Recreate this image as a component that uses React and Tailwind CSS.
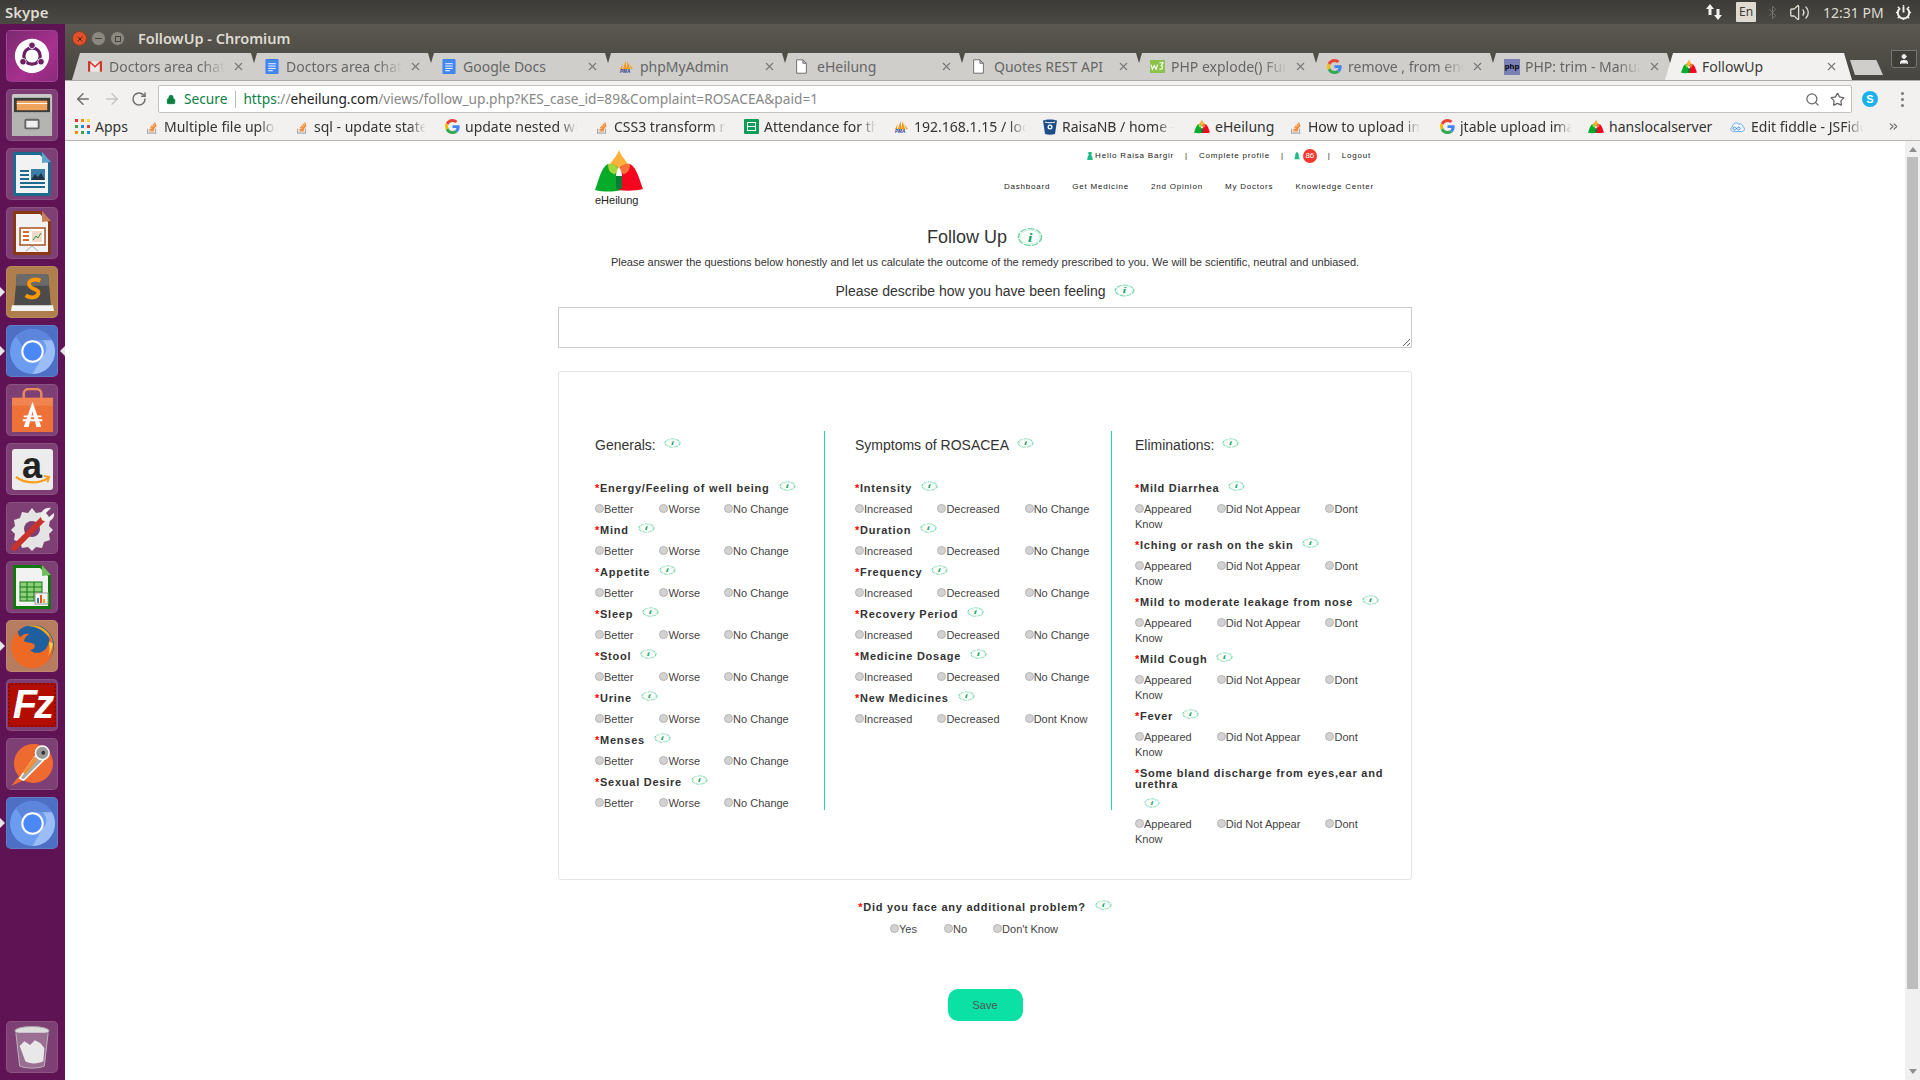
import React from "react";
import { ArrowLeft, ArrowRight, RotateCw, Lock, Search, Star, X, Bluetooth, Volume2, ChevronsRight, User } from "lucide-react";

const Logo = ({ className }) => (
  <svg viewBox="0 0 48 42" className={className}>
    <path d="M24 0C27 9 36 14 36 23C36 29 30 33 24 33C18 33 12 29 12 23C12 14 21 9 24 0Z" fill="#fdb13c" />
    <path d="M13 14C20 13 27 19 27 27C27 33 27 38 26 40C18 42 8 42 0 40C3 33 6 17 13 14Z" fill="#06ab2a" />
    <path d="M35 14C28 13 21 19 21 27C21 33 22 38 23 40C31 41 41 41 48 39C45 32 42 17 35 14Z" fill="#f4061e" />
    <path d="M13 14C17 13 22 16 24 20C21 22 20 25 19 24C15 23 13 20 13 14Z" fill="#a5d63c" />
    <path d="M35 14C31 13 26 16 24 20C27 22 28 25 29 24C33 23 35 20 35 14Z" fill="#f7713a" />
    <path d="M21 26C23 21 25 21 27 26L27 38L24 40L21 38Z" fill="#0c7a38" />
    <path d="M24 17C26 20 27 23 27 26L21 26C21 23 22 20 24 17Z" fill="#fff" />
  </svg>
);

const Info = ({ className }) => (
  <svg viewBox="0 0 26 26" preserveAspectRatio="none" className={className}>
    <ellipse cx="13" cy="13" rx="11.5" ry="11" fill="none" stroke="#6fd3a4" strokeWidth="1.6" strokeDasharray="7 1.4" />
    <ellipse cx="13" cy="13" rx="9.5" ry="9" fill="none" stroke="#c5eeda" strokeWidth="1" />
    <text x="13" y="19" textAnchor="middle" fontSize="17" fontStyle="italic" fontWeight="700" fontFamily="'Liberation Serif', serif" fill="#1aa566">i</text>
  </svg>
);

const Radio = () => (
  <span className="inline-block w-[9px] h-[9px] rounded-full bg-[#d2d2d2] border border-[#b4b4b4] align-[0px]" />
);

const Opt = ({ children, m = "" }) => (
  <span className={m}>
    <Radio />
    {children}{" "}
  </span>
);

const QLabel = ({ text }) => (
  <>
    <span className="text-[#f00]">*</span>
    {text}
  </>
);

const labelBase = "text-[11px] font-bold tracking-[0.75px] text-[#333]";
const labelCls = `${labelBase} leading-[14px]`;

const Q1 = ({ label, gap, a, b, c, m1, m2 }) => (
  <div className="h-[42px]">
    <div className={`${labelCls} flex items-center`}>
      <span><QLabel text={label} /></span>
      <Info className={`w-[17px] h-[10px] -mt-[4px] ${gap}`} />
    </div>
    <div className="mt-[7px] text-[11px] leading-[14px] text-[#444]">
      <Opt m={m1}>{a}</Opt>
      <Opt m={m2}>{b}</Opt>
      <Opt>{c}</Opt>
    </div>
  </div>
);

const Q3 = ({ label, gap }) => (
  <div className="h-[57px]">
    <div className={`${labelCls} flex items-center`}>
      <span><QLabel text={label} /></span>
      <Info className={`w-[17px] h-[10px] -mt-[4px] ${gap}`} />
    </div>
    <div className="mt-[7px] text-[11px] leading-[15px] text-[#444]">
      <Opt m="mr-[22px]">Appeared</Opt>
      <Opt m="mr-[22px]">Did Not Appear</Opt>
      <Opt>Dont Know</Opt>
    </div>
  </div>
);

const Heading = ({ children, gap }) => (
  <div className="h-[50px] flex items-start pt-[6px] text-[14px] leading-[16px] text-[#333]">
    <span>{children}</span>
    <Info className={`w-[17px] h-[10px] mt-[1px] ${gap}`} />
  </div>
);

const generals = [
  ["Energy/Feeling of well being", "ml-[9px]"],
  ["Mind", "ml-[9px]"],
  ["Appetite", "ml-[9px]"],
  ["Sleep", "ml-[9px]"],
  ["Stool", "ml-[9px]"],
  ["Urine", "ml-[9px]"],
  ["Menses", "ml-[9px]"],
  ["Sexual Desire", "ml-[9px]"],
];
const symptoms = [
  ["Intensity", "ml-[9px]"],
  ["Duration", "ml-[9px]"],
  ["Frequency", "ml-[9px]"],
  ["Recovery Period", "ml-[9px]"],
  ["Medicine Dosage", "ml-[9px]"],
];
const elim = [
  ["Mild Diarrhea", "ml-[9px]"],
  ["Iching or rash on the skin", "ml-[9px]"],
  ["Mild to moderate leakage from nose", "ml-[9px]"],
  ["Mild Cough", "ml-[9px]"],
  ["Fever", "ml-[9px]"],
];

/* ---------- favicons ---------- */
const SO = () => (
  <svg viewBox="0 0 16 16" className="w-[14px] h-[14px] shrink-0">
    <path d="M3 10v5h9v-5" fill="none" stroke="#a9a9a9" strokeWidth="1.4" />
    <path d="M5 12.500h5M5.200 10.600l5 .6M5.800 8.500l4.800 1.400M7 6.500l4.200 2.600M8.800 4.500l3.200 3.700M11 2.800l1.600 4.600" stroke="#f48024" strokeWidth="1.3" fill="none" />
  </svg>
);
const G = () => (
  <svg viewBox="0 0 48 48" className="w-[15px] h-[15px] shrink-0">
    <path fill="#EA4335" d="M24 9.500c3.500 0 6.700 1.300 9.100 3.500l6.800-6.800C35.800 2.400 30.300 0 24 0 14.600 0 6.500 5.400 2.600 13.200l7.900 6.200C12.400 13.700 17.700 9.500 24 9.500z" />
    <path fill="#4285F4" d="M46.900 24.500c0-1.600-.1-3.100-.4-4.500H24v9h12.900c-.6 3-2.200 5.500-4.700 7.200l7.600 5.900c4.400-4.100 7.100-10.100 7.100-17.600z" />
    <path fill="#FBBC05" d="M10.500 28.600c-.5-1.400-.8-3-.8-4.600s.3-3.200.8-4.600l-7.900-6.200C.9 16.500 0 20.100 0 24s.9 7.500 2.600 10.800l7.900-6.200z" />
    <path fill="#34A853" d="M24 48c6.500 0 11.900-2.100 15.900-5.800l-7.600-5.900c-2.200 1.400-4.900 2.300-8.200 2.300-6.300 0-11.600-4.200-13.500-9.900l-7.900 6.200C6.500 42.600 14.600 48 24 48z" />
  </svg>
);
const Docs = () => (
  <svg viewBox="0 0 14 16" className="w-[14px] h-[15px] shrink-0">
    <rect width="14" height="16" rx="1" fill="#4285f4" />
    <path d="M3 5h8M3 7.500h8M3 10h8M3 12.500h5" stroke="#fff" strokeWidth="1" />
  </svg>
);
const Gmail = () => (
  <svg viewBox="0 0 16 14" className="w-[14px] h-[13px] shrink-0">
    <rect y="1" width="16" height="12" fill="#e7e7e7" />
    <path d="M0 1h2.500v12H0zM13.500 1H16v12h-2.500z" fill="#d2362b" />
    <path d="M0 1h2.500L8 6l5.500-5H16L8 8.500z" fill="#d2362b" />
  </svg>
);
const Pma = () => (
  <svg viewBox="0 0 16 14" className="w-[15px] h-[13px] shrink-0">
    <path d="M4 10L7 1l1 9zM8 10l1-9 3 9zM1 10l3-6-1 6zM13 10l-2-6 4 6z" fill="#f39a1e" />
    <text x="1" y="14" fontSize="5" fontWeight="700" fontStyle="italic" fill="#1d3c8f" fontFamily="'Liberation Sans', sans-serif">PMA</text>
  </svg>
);
const DocO = () => (
  <svg viewBox="0 0 12 16" className="w-[11px] h-[15px] shrink-0">
    <path d="M.7.700h6.800l3.800 3.800v10.800H.7zM7.500.700v3.800h3.800" fill="#fff" stroke="#666" strokeWidth="1" />
  </svg>
);
const W3 = () => (
  <svg viewBox="0 0 16 14" className="w-[15px] h-[13px] shrink-0">
    <rect width="16" height="14" fill="#8bc34a" />
    <path d="M1 5l1.500 5 2-4 2 4 1.500-5" fill="none" stroke="#fff" strokeWidth="1.200" />
    <path d="M10 3h4l-2 3c2 0 2 5-2 4" fill="none" stroke="#fff" strokeWidth="1.200" />
  </svg>
);
const Php = () => (
  <span className="w-[16px] h-[16px] shrink-0 bg-[#7a7fb5] flex items-center justify-center text-[8px] leading-none font-bold text-black font-['Liberation_Mono',monospace]">php</span>
);
const Grid = () => (
  <span className="w-[15px] h-[15px] shrink-0 grid grid-cols-3 gap-[3px]">
    {["#e53935","#fb8c00","#fdd835","#43a047","#1e88e5","#e53935","#fb8c00","#43a047","#1e88e5"].map((c, i) => (
      <i key={i} className="block w-[3px] h-[3px]" style={{ background: c }} />
    ))}
  </span>
);
const Sheets = () => (
  <span className="w-[15px] h-[15px] shrink-0 rounded-[1px] bg-[#0f9d58] p-[3px]">
    <span className="block w-full h-full border border-white bg-[linear-gradient(#fff,#fff)] bg-[length:100%_1px] bg-center bg-no-repeat" />
  </span>
);
const Bucket = () => (
  <svg viewBox="0 0 14 16" className="w-[14px] h-[16px] shrink-0">
    <path d="M0 1.500C3 0 11 0 14 1.500L12 15c-3 1-7 1-10 0z" fill="#1d4e89" />
    <circle cx="7" cy="8" r="2.500" fill="#fff" />
    <circle cx="7" cy="8" r="1.200" fill="#1d4e89" />
    <path d="M2 3c3 1 7 1 10 0" stroke="#fff" fill="none" />
  </svg>
);
const Fiddle = () => (
  <svg viewBox="0 0 18 14" className="w-[17px] h-[13px] shrink-0">
    <path d="M4.500 12.500C1.500 12.500 .8 8.500 3.500 7.500 3.500 3.500 8 1.500 10.500 4.500 13 3.500 15 5.500 14.500 7 17.500 8 17 12.500 13.500 12.500z" fill="#eef5fd" stroke="#5fa4e8" />
    <path d="M6.800 8.200a1.500 1.500 0 1 0 0 2l2.400-2a1.500 1.500 0 1 1 0 2z" fill="none" stroke="#3b87d9" />
  </svg>
);
const Tri = () => <Logo className="w-[16px] h-[15px] shrink-0" />;

const tabs = [
  [<Gmail />, "Doctors area chat"],
  [<Docs />, "Doctors area chat"],
  [<Docs />, "Google Docs"],
  [<Pma />, "phpMyAdmin"],
  [<DocO />, "eHeilung"],
  [<DocO />, "Quotes REST API"],
  [<W3 />, "PHP explode() Function"],
  [<G />, "remove , from end"],
  [<Php />, "PHP: trim - Manual"],
  [<Tri />, "FollowUp"],
];

const bookmarks = [
  [<Grid />, "Apps", "w-[70px]"],
  [<SO />, "Multiple file upload", "w-[150px]"],
  [<SO />, "sql - update state", "w-[150px]"],
  [<G />, "update nested with", "w-[150px]"],
  [<SO />, "CSS3 transform not", "w-[149px]"],
  [<Sheets />, "Attendance for the", "w-[150px]"],
  [<Pma />, "192.168.1.15 / local", "w-[149px]"],
  [<Bucket />, "RaisaNB / home -", "w-[151px]"],
  [<Tri />, "eHeilung", "w-[95px]"],
  [<SO />, "How to upload image", "w-[151px]"],
  [<G />, "jtable upload image", "w-[148px]"],
  [<Tri />, "hanslocalserver", "w-[141px]"],
  [<Fiddle />, "Edit fiddle - JSFiddle", "w-[150px]"],
];

/* ---------- launcher ---------- */
const Tile = ({ bg = "bg-[#7d3f74]", left, right, children }) => (
  <div className="relative w-[65px] pl-[6px]">
    {left && <span className="absolute left-0 top-[21px] w-0 h-0 border-y-[5px] border-y-transparent border-l-[5px] border-l-[#e6e6e6]" />}
    {right && <span className="absolute right-0 top-[21px] w-0 h-0 border-y-[5px] border-y-transparent border-r-[5px] border-r-[#e6e6e6]" />}
    <div className={`w-[52px] h-[52px] rounded-[5px] ${bg} border border-white/10 flex items-center justify-center overflow-hidden`}>
      {children}
    </div>
  </div>
);
const Chromium = () => (
  <svg viewBox="0 0 44 44" className="w-[45px] h-[45px]">
    <circle cx="22" cy="22" r="22" fill="#6c9cf0" />
    <path d="M22 0a22 22 0 0 1 19 11H22a11 11 0 0 0-10 6L6 7A22 22 0 0 1 22 0z" fill="#5b86dc" />
    <path d="M41 11a22 22 0 0 1-19 33l10-17a11 11 0 0 0 0-16z" fill="#9bbdf7" />
    <circle cx="22" cy="22" r="10" fill="#4a88f5" stroke="#fff" strokeWidth="2" />
  </svg>
);
const launcher = [
  <Tile bg="bg-[linear-gradient(135deg,#7a2a70,#a8308f_60%,#8c2a7c)]">
    <svg viewBox="0 0 44 44" className="w-[36px] h-[36px]">
      <circle cx="22" cy="22" r="21" fill="#fff" />
      <circle cx="22" cy="22" r="10" fill="none" stroke="#6b2165" strokeWidth="4" />
      <circle cx="22" cy="9" r="4" fill="#6b2165" stroke="#fff" />
      <circle cx="11" cy="29" r="4" fill="#6b2165" stroke="#fff" />
      <circle cx="33" cy="29" r="4" fill="#6b2165" stroke="#fff" />
    </svg>
  </Tile>,
  <Tile>
    <svg viewBox="0 0 44 46" className="w-[42px] h-[44px]">
      <rect x="1" y="1" width="42" height="44" rx="2" fill="#c8c8c6" />
      <rect x="3" y="5" width="38" height="16" fill="#3b3b3a" />
      <rect x="6" y="8" width="32" height="10" fill="#f0a45b" />
      <path d="M6 11h32" stroke="#fff" />
      <rect x="1" y="20" width="42" height="25" fill="#b4b4b2" />
      <rect x="15" y="28" width="14" height="9" rx="1" fill="#eee" stroke="#666" strokeWidth="2" />
    </svg>
  </Tile>,
  <Tile>
    <svg viewBox="0 0 40 46" className="w-[40px] h-[46px]">
      <path d="M1 1h28l10 10v34H1z" fill="#1d6a8f" />
      <path d="M4 4h24l8 8v30H4z" fill="#f2f2f2" />
      <path d="M30 1l9 10-9 1z" fill="#5da4c9" />
      <path d="M8 20h9M8 24h9M8 28h9M8 32h25M8 36h25" stroke="#1d6a8f" strokeWidth="2" />
      <rect x="19" y="18" width="14" height="11" fill="#3c7ea8" />
      <path d="M19 29l4-6 3 3 3-4 4 7z" fill="#234" />
    </svg>
  </Tile>,
  <Tile>
    <svg viewBox="0 0 40 46" className="w-[40px] h-[46px]">
      <path d="M1 1h28l10 10v34H1z" fill="#8a3a12" />
      <path d="M4 4h24l8 8v30H4z" fill="#f2f2f2" />
      <path d="M30 1l9 10-9 1z" fill="#c68256" />
      <rect x="8" y="18" width="25" height="17" fill="#fff" stroke="#a8501f" strokeWidth="1.500" />
      <path d="M11 22h6M11 26h6M11 30h6" stroke="#d96a2b" strokeWidth="2" />
      <rect x="20" y="21" width="10" height="11" fill="#f3d9c8" />
      <path d="M21 30l3-4 2 2 3-5" stroke="#2c9a3f" fill="none" />
      <path d="M20 36l-6 5M20 36l6 5" stroke="#aaa" />
    </svg>
  </Tile>,
  <Tile bg="bg-[#b07e4c]" left>
    <svg viewBox="0 0 46 42" className="w-[45px] h-[41px]">
      <path d="M7 2h32l3 34H4z" fill="#4b4b4b" />
      <path d="M7 2h32l1 12H6z" fill="#6a6a6a" />
      <path d="M2 34h42l1 6H1z" fill="#f4f4f4" />
      <path d="M31 9c-6-3-14 0-11 5s10 3 9 8-9 5-13 2" fill="none" stroke="#ff9800" strokeWidth="4" />
    </svg>
  </Tile>,
  <Tile bg="bg-[#4d6fc4]" left right><Chromium /></Tile>,
  <Tile>
    <svg viewBox="0 0 44 46" className="w-[43px] h-[45px]">
      <path d="M13 12V6a5 5 0 0 1 5-5h8a5 5 0 0 1 5 5v6" fill="none" stroke="#e88a5e" strokeWidth="2.500" />
      <rect x="1" y="10" width="42" height="35" fill="#ee7238" />
      <rect x="1" y="10" width="42" height="8" fill="#f08450" />
      <path d="M22 14l-9 26h5l4-16 4 16h5z" fill="#fff" />
      <path d="M13 29h18M12 33h20" stroke="#fff" strokeWidth="2" />
    </svg>
  </Tile>,
  <Tile>
    <div className="w-[41px] h-[41px] rounded-[3px] bg-[#ececec] relative flex items-center justify-center">
      <span className="font-['Liberation_Sans',sans-serif] font-bold text-[36px] leading-none text-[#222] -mt-[6px]">a</span>
      <svg viewBox="0 0 40 12" className="absolute left-[3px] bottom-[4px] w-[36px] h-[11px]">
        <path d="M1 2c10 8 26 8 36 1" fill="none" stroke="#f79c1d" strokeWidth="2.500" />
        <path d="M32 1l6 1-2 6" fill="none" stroke="#f79c1d" strokeWidth="2" />
      </svg>
    </div>
  </Tile>,
  <Tile>
    <svg viewBox="0 0 46 46" className="w-[46px] h-[46px]">
      <path d="M23 3l4 5 6-1 2 6 6 2-1 6 4 4-4 4 1 6-6 2-2 6-6-1-4 4-4-4-6 1-2-6-6-2 1-6-4-4 4-4-1-6 6-2 2-6 6 1z" fill="#e4e4e4" />
      <circle cx="23" cy="24" r="8" fill="#7d3f74" />
      <path d="M5 43L35 13" stroke="#c8322a" strokeWidth="6" strokeLinecap="round" />
      <path d="M33 15c-4-8 3-13 9-12l-5 5 3 4 5-4c1 6-5 11-12 7z" fill="#eee" />
    </svg>
  </Tile>,
  <Tile>
    <svg viewBox="0 0 40 46" className="w-[40px] h-[46px]">
      <path d="M1 1h28l10 10v34H1z" fill="#12790f" />
      <path d="M4 4h24l8 8v30H4z" fill="#f2f2f2" />
      <path d="M30 1l9 10-9 1z" fill="#6fbf5f" />
      <rect x="8" y="18" width="22" height="19" fill="#8ed07d" stroke="#12790f" />
      <path d="M8 23h22M8 28h22M8 33h22M15 18v19M22 18v19" stroke="#12790f" />
      <rect x="23" y="29" width="13" height="11" fill="#f5f5f5" stroke="#999" />
      <rect x="25" y="34" width="2" height="5" fill="#3c7ea8" />
      <rect x="28" y="31" width="2" height="8" fill="#e2541e" />
      <rect x="31" y="35" width="2" height="4" fill="#f2a71b" />
    </svg>
  </Tile>,
  <Tile bg="bg-[#b87c60]" left>
    <svg viewBox="0 0 46 46" className="w-[46px] h-[46px]">
      <circle cx="24" cy="23" r="21" fill="#1f5f9e" />
      <path d="M18 3a21 21 0 0 1 26 17l-6-8C33 6 25 3 18 3z" fill="#f2a71b" />
      <path d="M44 20c2 12-6 24-19 25C12 46 2 36 2 23 3 16 6 10 9 8c0 3 1 5 2 6 3-3 7-4 9-3-3 2-5 5-5 7 2 2 7 1 10 3 2 2 0 6-4 6 5 5 14 3 17-3 2-4 3-8 2-12 2 2 3 6 4 11z" fill="#ee6a24" />
      <path d="M44 20c-1 6-3 10-5 13 2-5 2-9 1-14z" fill="#ffd23b" />
    </svg>
  </Tile>,
  <Tile>
    <div className="w-[48px] h-[44px] bg-[#b30d00] rounded-[2px] flex items-center justify-center [border:2px_dotted_#8a0a00]">
      <span className="font-['Liberation_Sans',sans-serif] font-bold italic text-[40px] leading-none text-white -mt-[2px] tracking-[-3px]">Fz</span>
    </div>
  </Tile>,
  <Tile>
    <svg viewBox="0 0 44 44" className="w-[43px] h-[43px]">
      <circle cx="23" cy="21" r="20" fill="#ef6a30" />
      <path d="M0 44l8-10 5 4z" fill="#ef6a30" />
      <path d="M9 36L26 12l7 6-20 20z" fill="#aaa" stroke="#fff" strokeWidth="1.500" />
      <path d="M12 30L24 14l3 3-12 15z" fill="#f09038" />
      <circle cx="32" cy="10" r="7" fill="#999" stroke="#fff" strokeWidth="1.500" />
      <circle cx="33" cy="10" r="2" fill="#333" />
    </svg>
  </Tile>,
  <Tile bg="bg-[#4d6fc4]" left><Chromium /></Tile>,
];

export default function App() {
  return (
    <div className="w-[1920px] h-[1080px] overflow-hidden flex flex-col bg-white font-['Liberation_Sans',sans-serif]">
      {/* top panel */}
      <div className="h-[24px] shrink-0 bg-[linear-gradient(#3c3b37,#4a4943)] flex items-center text-[#dfdbd2] font-['Noto_Sans',sans-serif]">
        <span className="ml-[5px] text-[15px] font-semibold">Skype</span>
        <div className="ml-auto flex items-center">
          <svg viewBox="0 0 18 18" className="w-[18px] h-[18px]">
            <path d="M5 1l4 5H6.500v6h-3V6H1zM13 17l-4-5h2.500V6h3v6H17z" fill="#f2f1ee" />
          </svg>
          <span className="ml-[13px] w-[20px] h-[20px] rounded-[1px] bg-[#dfdbd2] text-[#3c3b37] text-[12px] flex items-center justify-center">En</span>
          <Bluetooth className="ml-[9px] w-[15px] h-[15px] text-[#77756e]" strokeWidth={1.5} />
          <Volume2 className="ml-[9px] w-[21px] h-[21px] text-[#dfdbd2]" strokeWidth={1.5} />
          <span className="ml-[13px] text-[14px] w-[60px] whitespace-nowrap">12:31 PM</span>
          <svg viewBox="0 0 18 18" className="ml-[12px] mr-[8px] w-[17px] h-[17px]">
            <path d="M9 3v6" stroke="#f2f1ee" strokeWidth="2" />
            <path d="M5.500 4.500a6 6 0 1 0 7 0" fill="none" stroke="#f2f1ee" strokeWidth="2" />
            <path d="M9 1v2M9 15v2M1 9h2M15 9h2M3 3l1.500 1.500M13.500 13.500L15 15M3 15l1.500-1.500M13.500 4.500L15 3" stroke="#f2f1ee" strokeWidth="1.500" />
          </svg>
        </div>
      </div>

      <div className="flex-1 flex min-h-0">
        {/* launcher */}
        <div className="w-[65px] shrink-0 bg-[#5f1354] flex flex-col pt-[6px] gap-[7px]">
          {launcher.map((t, i) => (
            <React.Fragment key={i}>{t}</React.Fragment>
          ))}
          <div className="mt-auto mb-[7px]">
            <Tile>
              <svg viewBox="0 0 40 46" className="w-[38px] h-[44px]">
                <ellipse cx="20" cy="6" rx="18" ry="4.500" fill="#ddd" stroke="#aaa" />
                <path d="M3 8l4 35c6 3 20 3 26 0l4-35" fill="#9b6f94" stroke="#bbb" />
                <path d="M7 22l5-5 6 4 5-5 6 3 4 5-1 14c-6 3-14 3-19 0z" fill="#e8e8e8" />
              </svg>
            </Tile>
          </div>
        </div>

        {/* browser window */}
        <div className="flex-1 min-w-0 flex flex-col">
          <div className="h-[56px] shrink-0 bg-[linear-gradient(#5a5850,#46453f)] flex flex-col font-['Noto_Sans',sans-serif]">
            <div className="h-[29px] shrink-0 flex items-center pl-[7px]">
              <span className="w-[15px] h-[15px] rounded-full bg-[#e0512c] border border-[#8a3a1f] flex items-center justify-center">
                <X className="w-[8px] h-[8px] text-[#5a1d0c]" strokeWidth={3} />
              </span>
              <span className="ml-[4px] w-[15px] h-[15px] rounded-full bg-[#8a887f] border border-[#55534c] flex items-center justify-center">
                <span className="w-[7px] h-[1px] bg-[#44433d]" />
              </span>
              <span className="ml-[4px] w-[15px] h-[15px] rounded-full bg-[#8a887f] border border-[#55534c] flex items-center justify-center">
                <span className="w-[6px] h-[6px] border border-[#44433d]" />
              </span>
              <span className="ml-[13px] text-[14.5px] font-semibold text-[#dfdbd2]">FollowUp - Chromium</span>
            </div>
            <div className="h-[27px] shrink-0 flex pl-[7px]">
              {tabs.map(([icon, title], i) => (
                <div
                  key={i}
                  className={`w-[187px] shrink-0 -mr-[10px] h-[27px] flex items-center pl-[16px] [clip-path:polygon(0_100%,8px_0,calc(100%-8px)_0,100%_100%)] ${i === 9 ? "bg-[#f2f1f0] text-[#3c3b37]" : "bg-[#cfcecb] text-[#666]"}`}
                >
                  <span className="w-[15px] shrink-0 flex justify-start">{icon}</span>
                  <span className={`ml-[6px] w-[116px] overflow-hidden whitespace-nowrap text-[14px] ${title.length > 15 ? "[mask-image:linear-gradient(90deg,#000_80%,transparent)]" : ""}`}>{title}</span>
                  <X className="ml-[7px] w-[13px] h-[13px] text-[#777]" strokeWidth={2} />
                </div>
              ))}
              <div className="ml-[8px] mt-[7px] w-[33px] h-[15px] shrink-0 bg-[#cfcecb] [clip-path:polygon(0_0,80%_0,100%_100%,15%_100%)]" />
              <div className="ml-[8px] -mt-[3px] w-[26px] h-[18px] shrink-0 rounded-b-[3px] border border-[#777] bg-[#3f3e39] flex items-center justify-center">
                <User className="w-[12px] h-[12px] text-[#eee] fill-[#eee]" />
              </div>
            </div>
          </div>

          {/* toolbar */}
          <div className="h-[33px] shrink-0 pt-[4px] bg-[#f2f1f0] flex items-center font-['Noto_Sans',sans-serif] border-t border-[#aaa]">
            <ArrowLeft className="ml-[9px] w-[18px] h-[18px] text-[#6e6e6e]" strokeWidth={2} />
            <ArrowRight className="ml-[11px] w-[18px] h-[18px] text-[#c4c4c4]" strokeWidth={2} />
            <RotateCw className="ml-[10px] w-[16px] h-[16px] text-[#6e6e6e]" strokeWidth={2.2} />
            <div className="ml-[11px] w-[1694px] h-[28px] bg-white border border-[#c0c0c0] rounded-[2px] flex items-center text-[13.7px]">
              <Lock className="ml-[7px] w-[10px] h-[13px] text-[#0b8043] fill-[#0b8043]" strokeWidth={2} />
              <span className="ml-[8px] text-[#0b8043]">Secure</span>
              <span className="ml-[8px] w-[1px] h-[17px] bg-[#bbb]" />
              <span className="ml-[7px] whitespace-nowrap text-[#888]">
                <span className="text-[#0b8043]">https</span>://<span className="text-[#222]">eheilung.com</span>/views/follow_up.php?KES_case_id=89&amp;Complaint=ROSACEA&amp;paid=1
              </span>
              <Search className="ml-auto w-[15px] h-[15px] text-[#666]" strokeWidth={2} />
              <Star className="ml-[10px] mr-[6px] w-[15px] h-[15px] text-[#666]" strokeWidth={2} />
            </div>
            <svg viewBox="0 0 16 16" className="ml-[10px] w-[16px] h-[16px]">
              <circle cx="8" cy="8" r="8" fill="#19b0ec" />
              <text x="8" y="12" textAnchor="middle" fontSize="11" fontWeight="700" fill="#fff" fontFamily="'Liberation Sans', sans-serif">S</text>
            </svg>
            <div className="ml-[23px] flex flex-col gap-[3px]">
              <i className="block w-[3px] h-[3px] rounded-full bg-[#777]" />
              <i className="block w-[3px] h-[3px] rounded-full bg-[#777]" />
              <i className="block w-[3px] h-[3px] rounded-full bg-[#777]" />
            </div>
          </div>

          {/* bookmarks */}
          <div className="h-[28px] shrink-0 bg-[#f2f1f0] border-b border-[#b8b8b8] flex items-center pl-[10px] text-[14px] text-[#333] font-['Noto_Sans',sans-serif]">
            {bookmarks.map(([icon, title, w], i) => (
              <div key={i} className={`${w} shrink-0 flex items-center`}>
                {icon}
                <span className={`ml-[5px] whitespace-nowrap ${title.length > 15 ? "max-w-[112px] overflow-hidden [mask-image:linear-gradient(90deg,#000_85%,transparent)]" : ""}`}>{title}</span>
              </div>
            ))}
            <ChevronsRight className="ml-[8px] w-[13px] h-[13px] text-[#666]" strokeWidth={2} />
          </div>

          {/* page */}
          <div className="flex-1 min-h-0 flex">
            <div className="flex-1 min-w-0 bg-white overflow-hidden">
              <div className="w-[854px] ml-[493px]">
                {/* header */}
                <div className="h-[84px] flex justify-between pl-[37px] pr-[38px] text-[#333]">
                  <div className="pt-[9px] w-[48px]">
                    <Logo className="w-[48px] h-[42px]" />
                    <div className="text-[11px] leading-[12px] mt-[2px] text-[#222]">eHeilung</div>
                  </div>
                  <div className="pt-[8px] flex flex-col items-end text-[8px] tracking-[0.8px] text-[#222]">
                    <div className="h-[14px] flex items-center">
                      <svg viewBox="0 0 6 10" className="w-[6px] h-[9px] mr-[2px]"><path d="M3 0a1.500 1.500 0 0 1 1 3c1 1 2 2 2 6l-6 0c0-4 1-5 2-6a1.500 1.500 0 0 1 1-3z" fill="#1fb98a" /></svg>
                      <span>Hello Raisa Bargir</span>
                      <span className="ml-[11px]">|</span>
                      <span className="ml-[11px]">Complete profile</span>
                      <span className="ml-[11px]">|</span>
                      <svg viewBox="0 0 6 10" className="ml-[10px] w-[6px] h-[9px]"><path d="M3 0c2 1 2 3 2 5l1 3H0l1-3c0-2 0-4 2-5z" fill="#1fb98a" /></svg>
                      <span className="ml-[3px] w-[14px] h-[14px] rounded-full bg-[#f4392f] text-white tracking-normal flex items-center justify-center">86</span>
                      <span className="ml-[11px]">|</span>
                      <span className="ml-[11px] mr-[3px]">Logout</span>
                    </div>
                    <div className="mt-[17px] h-[14px] flex items-center gap-[22px]">
                      <span>Dashboard</span>
                      <span>Get Medicine</span>
                      <span>2nd Opinion</span>
                      <span>My Doctors</span>
                      <span>Knowledge Center</span>
                    </div>
                  </div>
                </div>

                {/* title */}
                <div className="h-[24px] flex items-center justify-center text-[18px] text-[#333]">
                  <span>Follow Up</span>
                  <Info className="ml-[10px] w-[26px] h-[20px]" />
                </div>
                <p className="mt-[6px] h-[14px] text-center text-[11px] leading-[14px] text-[#333]">
                  Please answer the questions below honestly and let us calculate the outcome of the remedy prescribed to you. We will be scientific, neutral and unbiased.
                </p>
                <div className="mt-[14px] h-[16px] flex items-center justify-center text-[14px] text-[#333]">
                  <span>Please describe how you have been feeling</span>
                  <Info className="ml-[8px] -mt-[1px] w-[21px] h-[13px]" />
                </div>
                <textarea className="block mt-[8px] w-full h-[41px] bg-white border border-[#ccc] outline-none" />

                {/* card */}
                <div className="mt-[23px] h-[509px] border border-[#e4e4e4] rounded-[3px] pt-[59px] flex">
                  <div className="w-[266px] h-[379px] pl-[36px] border-r border-[#1fd8a5]">
                    <Heading gap="ml-[8px]">Generals:</Heading>
                    {generals.map(([l, g]) => (
                      <Q1 key={l} label={l} gap={g} a="Better" b="Worse" c="No Change" m1="mr-[23px]" m2="mr-[21px]" />
                    ))}
                  </div>
                  <div className="w-[287px] h-[379px] pl-[30px] border-r border-[#1fd8a5]">
                    <Heading gap="ml-[8px]">Symptoms of ROSACEA</Heading>
                    {symptoms.map(([l, g]) => (
                      <Q1 key={l} label={l} gap={g} a="Increased" b="Decreased" c="No Change" m1="mr-[22px]" m2="mr-[22px]" />
                    ))}
                    <Q1 label="New Medicines" gap="ml-[9px]" a="Increased" b="Decreased" c="Dont Know" m1="mr-[22px]" m2="mr-[22px]" />
                  </div>
                  <div className="w-[273px] pl-[23px] h-[379px]">
                    <Heading gap="ml-[8px]">Eliminations:</Heading>
                    <div className="w-[252px]">
                      {elim.map(([l, g]) => (
                        <Q3 key={l} label={l} gap={g} />
                      ))}
                      <div className={`${labelBase} leading-[11px] pt-[2px]`}>
                        <QLabel text="Some bland discharge from eyes,ear and urethra" />
                      </div>
                      <Info className="ml-[9px] mt-[8px] w-[16px] h-[10px]" />
                      <div className="mt-[9px] text-[11px] leading-[15px] text-[#444]">
                        <Opt m="mr-[22px]">Appeared</Opt>
                        <Opt m="mr-[22px]">Did Not Appear</Opt>
                        <Opt>Dont Know</Opt>
                      </div>
                    </div>
                  </div>
                </div>

                {/* additional */}
                <div className={`${labelCls} mt-[20px] flex items-center justify-center`}>
                  <span><QLabel text="Did you face any additional problem?" /></span>
                  <Info className="ml-[9px] -mt-[4px] w-[17px] h-[10px]" />
                </div>
                <div className="mt-[8px] pr-[22px] text-center text-[11px] leading-[14px] text-[#444]">
                  <Opt m="mr-[24px]">Yes</Opt>
                  <Opt m="mr-[23px]">No</Opt>
                  <Opt>Don't Know</Opt>
                </div>
                <button className="block mx-auto mt-[53px] w-[75px] h-[32px] rounded-[10px] bg-[#0be0a5] text-[11px] text-[#4a5a55]">Save</button>
              </div>
            </div>

            {/* scrollbar */}
            <div className="w-[15px] shrink-0 bg-[#f0f0f0] flex flex-col items-center">
              <span className="mt-[6px] w-0 h-0 border-x-[4px] border-x-transparent border-b-[5px] border-b-[#8e8e8e]" />
              <span className="mt-[5px] w-[11px] h-[832px] bg-[#bdbdbd]" />
              <span className="mt-auto mb-[6px] w-0 h-0 border-x-[4px] border-x-transparent border-t-[5px] border-t-[#8e8e8e]" />
            </div>
          </div>
        </div>
      </div>
    </div>
  );
}
